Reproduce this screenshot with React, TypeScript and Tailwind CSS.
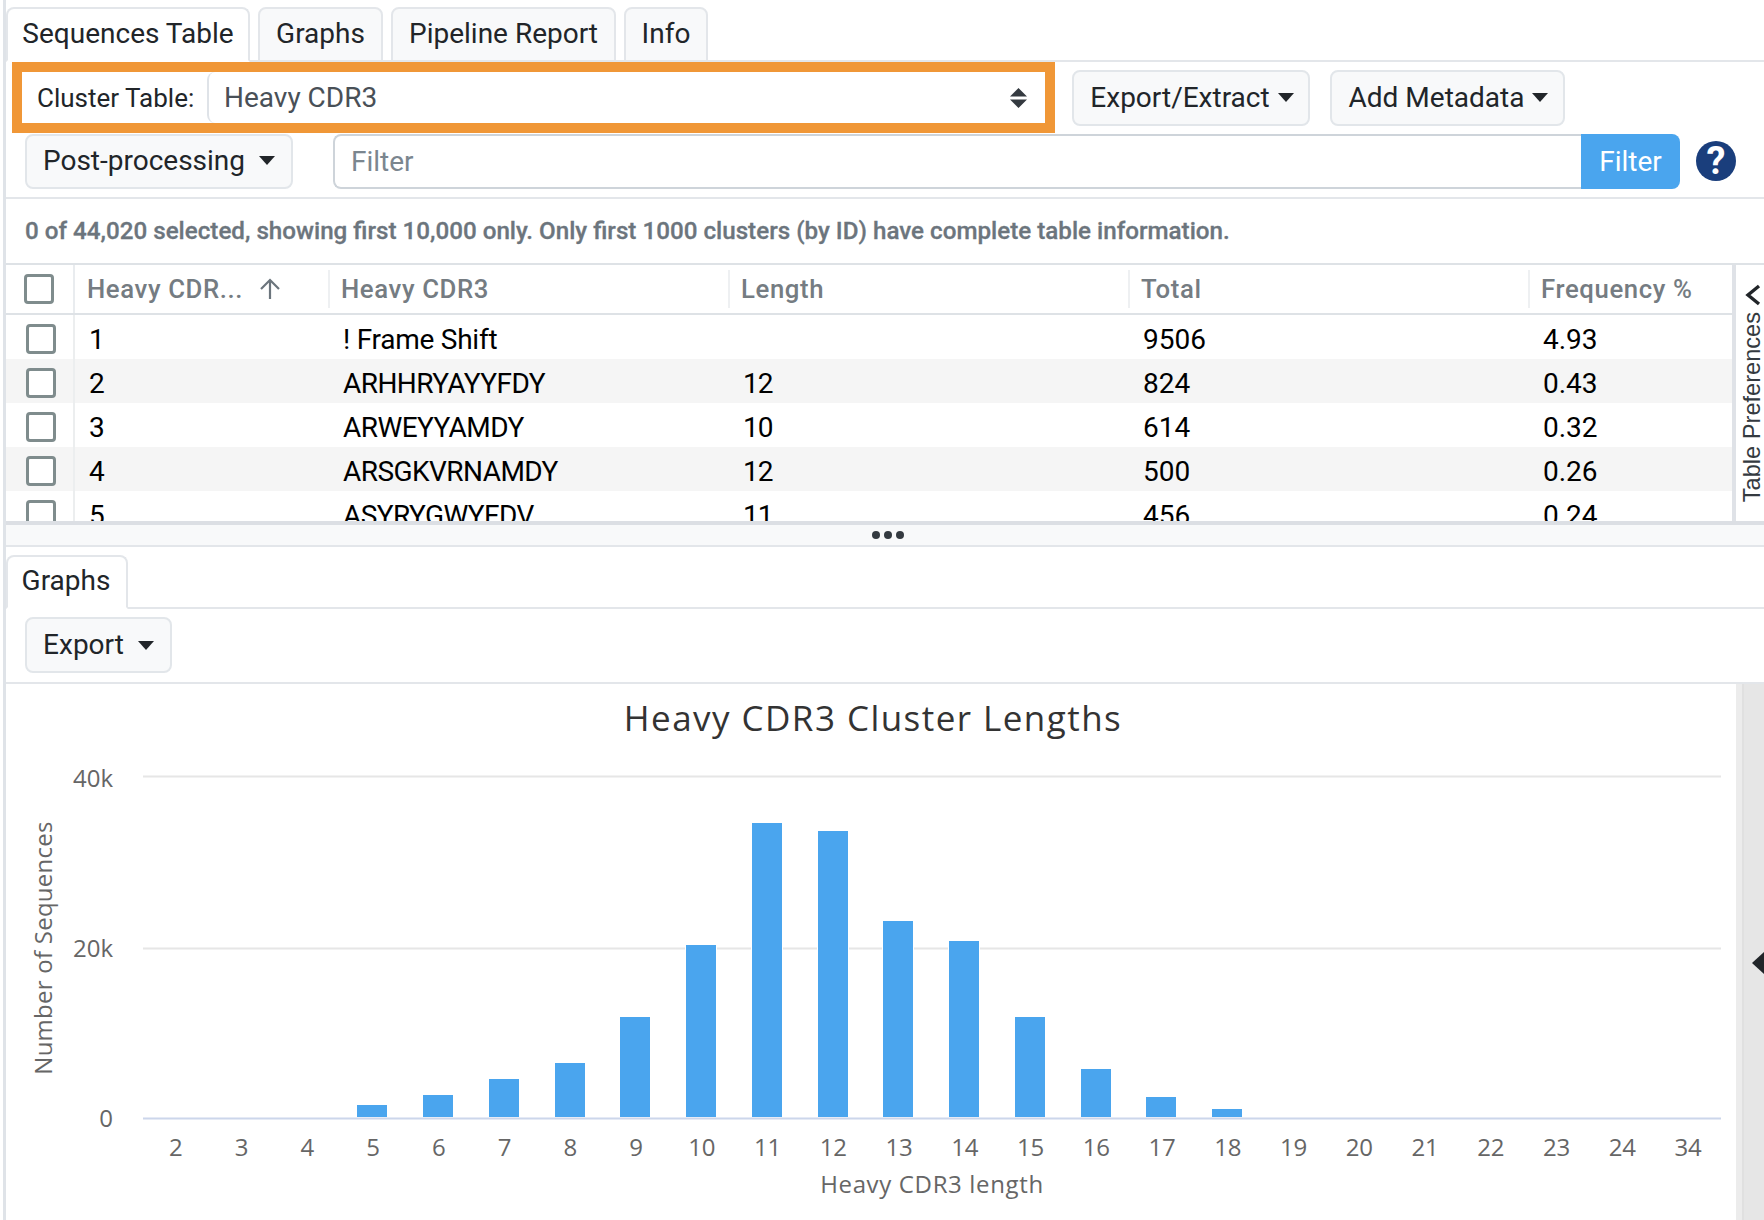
const topTabs = [
  { label: "Sequences Table", width: "w-[244px]", active: true },
  { label: "Graphs", width: "w-[125px]", active: false },
  { label: "Pipeline Report", width: "w-[225px]", active: false },
  { label: "Info", width: "w-[84px]", active: false },
];

const rows = [
  { id: "1", cdr3: "! Frame Shift", length: "", total: "9506", freq: "4.93" },
  { id: "2", cdr3: "ARHHRYAYYFDY", length: "12", total: "824", freq: "0.43" },
  { id: "3", cdr3: "ARWEYYAMDY", length: "10", total: "614", freq: "0.32" },
  { id: "4", cdr3: "ARSGKVRNAMDY", length: "12", total: "500", freq: "0.26" },
  { id: "5", cdr3: "ASYRYGWYFDV", length: "11", total: "456", freq: "0.24" },
];

const categories = [
  "2", "3", "4", "5", "6", "7", "8", "9", "10", "11", "12", "13",
  "14", "15", "16", "17", "18", "19", "20", "21", "22", "23", "24", "34",
];

// bar heights in px, read off the plot
const barHeights = [0, 0, 0, 12, 22, 38, 54, 100, 172, 294, 286, 196, 176, 100, 48, 20, 8, 0, 0, 0, 0, 0, 0, 0];

const PLOT_LEFT = 143;
const PLOT_RIGHT = 1721;
const STEP = (PLOT_RIGHT - PLOT_LEFT) / 24;

function Caret() {
  return <span className="inline-block size-0 border-x-[8px] border-t-[9px] border-x-transparent border-t-[#212529]" />;
}

function DropButton({ label, width, gap }: { label: string; width: string; gap: string }) {
  return (
    <button className={`flex h-[56px] shrink-0 items-center justify-center rounded-[8px] border-2 border-[#e2e6ea] bg-[#f8f9fa] pl-[2px] text-[28px] text-[#212529] ${width} ${gap}`}>
      <span>{label}</span>
      <Caret />
    </button>
  );
}

function Checkbox({ className }: { className: string }) {
  return <span className={`block size-[30px] rounded-[4px] border-[3.5px] border-[#7f8c8d] bg-white ${className}`} />;
}

function ClusterTable() {
  const columns = "grid grid-cols-[69px_253px_400px_400px_400px_204px]";
  return (
    <div className="flex h-[258px] overflow-hidden border-t-2 border-[#dee2e6]">
      <div className="w-[1726px] shrink-0">
        <div className={`${columns} h-[50px] items-center border-b-2 border-[#dee2e6] text-[25.75px] font-medium tracking-[0.6px] text-[#757c82]`}>
          <div className="flex h-full items-center border-r-2 border-[#e9ecef] pl-[18px]">
            <Checkbox className="" />
          </div>
          <div className="flex items-center pl-[12px]">
            <span>Heavy CDR...</span>
            <svg className="ml-[15px]" width="24" height="22" viewBox="0 0 24 22" fill="none" stroke="#6c757d" strokeWidth="2.2">
              <path d="M12 21V2M3 11l9-9 9 9" />
            </svg>
          </div>
          <div className="border-l-2 border-[#eef0f2] pl-[11px]">Heavy CDR3</div>
          <div className="border-l-2 border-[#eef0f2] pl-[11px]">Length</div>
          <div className="border-l-2 border-[#eef0f2] pl-[11px]">Total</div>
          <div className="border-l-2 border-[#eef0f2] pl-[11px]">Frequency %</div>
        </div>
        {rows.map((row, i) => (
          <div key={row.id} className={`${columns} h-[44px] items-center text-[28px] text-black ${i % 2 === 1 ? "bg-[#f5f5f5]" : "bg-white"}`}>
            <div className="flex h-full items-center border-r-2 border-[#eceeef] pl-[20px]">
              <Checkbox className="mt-[2px]" />
            </div>
            <div className="pt-[4px] pl-[14px]">{row.id}</div>
            <div className={`pt-[4px] pl-[15px] ${i === 0 ? "tracking-[-0.25px]" : "tracking-[-0.55px]"}`}>{row.cdr3}</div>
            <div className="pt-[4px] pl-[15px] tracking-[-1px]">{row.length}</div>
            <div className="pt-[4px] pl-[15px]">{row.total}</div>
            <div className="pt-[4px] pl-[15px]">{row.freq}</div>
          </div>
        ))}
      </div>
      <div className="flex w-[32px] shrink-0 flex-col items-center border-l-4 border-[#dfe2e7] pt-[19px] pl-[6px]">
        <svg width="16" height="22" viewBox="0 0 16 22" fill="none" stroke="#212529" strokeWidth="3.4">
          <path d="M14 2 3 11l11 9" />
        </svg>
        <span className="mt-[6px] rotate-180 font-['Liberation_Sans',sans-serif] text-[23.6px] leading-none whitespace-nowrap text-[#343a40] [writing-mode:vertical-rl]">
          Table Preferences
        </span>
      </div>
    </div>
  );
}

function HistogramChart() {
  const text = "font-['Open_Sans',sans-serif]";
  return (
    <svg className="block shrink-0" width="1730" height="536" viewBox="6 684 1730 536">
      <text x="873" y="731" textAnchor="middle" fill="#333333" fontSize="35" letterSpacing="1.45" className={text}>
        Heavy CDR3 Cluster Lengths
      </text>
      <rect x={PLOT_LEFT} y="775.5" width={PLOT_RIGHT - PLOT_LEFT} height="2" fill="#e6e6e6" />
      <rect x={PLOT_LEFT} y="947.5" width={PLOT_RIGHT - PLOT_LEFT} height="2" fill="#e6e6e6" />
      <text x="113" y="787" textAnchor="end" fill="#666666" fontSize="24" className={text}>40k</text>
      <text x="113" y="957" textAnchor="end" fill="#666666" fontSize="24" className={text}>20k</text>
      <text x="113" y="1127" textAnchor="end" fill="#666666" fontSize="24" className={text}>0</text>
      {categories.map((cat, i) => {
        const center = PLOT_LEFT + STEP * (i + 0.5);
        return (
          <g key={cat}>
            {barHeights[i] > 0 && (
              <rect x={Math.round(center - 15.7)} y={1117 - barHeights[i]} width="30" height={barHeights[i]} fill="#4aa5ee" stroke="#ffffff" strokeWidth="2" paintOrder="stroke" />
            )}
            <text x={center} y="1155.5" textAnchor="middle" fill="#666666" fontSize="24" className={text}>{cat}</text>
          </g>
        );
      })}
      <rect x={PLOT_LEFT} y="1117.5" width={PLOT_RIGHT - PLOT_LEFT} height="2" fill="#ccd6eb" />
      <text x="932" y="1193" textAnchor="middle" fill="#666666" fontSize="24" letterSpacing="0.65" className={text}>
        Heavy CDR3 length
      </text>
      <text transform="translate(52 948) rotate(-90)" textAnchor="middle" fill="#666666" fontSize="24" letterSpacing="0.25" className={text}>
        Number of Sequences
      </text>
    </svg>
  );
}

export default function App() {
  return (
    <div className="h-[1220px] w-[1764px] overflow-hidden bg-white pl-[3px] font-['Roboto',sans-serif]">
      <div className="flex h-full flex-col border-l-[3px] border-[#dfe3e8]">
        {/* top tabs */}
        <div className="flex h-[62px] shrink-0 items-end gap-[8px] border-b-2 border-[#e3e6ea] pt-[7px]">
          {topTabs.map((tab) => (
            <div
              key={tab.label}
              className={`-mb-[2px] flex h-[55px] items-center justify-center rounded-t-[8px] border-2 pb-[2px] text-[28px] text-[#212529] ${tab.width} ${
                tab.active ? "border-[#e3e6ea] border-b-white bg-white" : "border-[#e3e6ea] bg-[#f8f9fa]"
              }`}
            >
              {tab.label}
            </div>
          ))}
        </div>

        {/* cluster select + actions */}
        <div className="flex h-[71px] shrink-0 items-center pl-[6px]">
          <div className="flex h-[71px] w-[1043px] shrink-0 items-center border-[10px] border-[#f09737] bg-white pl-[15px] text-[26px] text-[#212529]">
            <span className="w-[170px] shrink-0 pt-[1px]">Cluster Table:</span>
            <div className="flex h-full flex-1 items-center justify-between rounded-l-[8px] border-l-2 border-[#dfe3e8] pr-[18px] pl-[15px] text-[28px] text-[#495057]">
              <span className="pt-[1px]">Heavy CDR3</span>
              <svg width="17" height="20" viewBox="0 0 17 20" fill="#343a40">
                <path d="M8.5 0 17 8.5H0zM0 11.5h17L8.5 20z" />
              </svg>
            </div>
          </div>
          <DropButton label="Export/Extract" width="w-[238px]" gap="ml-[17px] gap-[8px]" />
          <DropButton label="Add Metadata" width="w-[235px]" gap="ml-[20px] gap-[8px]" />
        </div>

        {/* post-processing + filter */}
        <div className="flex h-[66px] shrink-0 items-start border-b-2 border-[#e3e6ea] pt-[1px] pl-[19px]">
          <button className="flex h-[55px] w-[268px] shrink-0 items-center justify-center gap-[14px] rounded-[8px] border-2 border-[#e2e6ea] bg-[#f8f9fa] pb-[2px] text-[28px] text-[#212529]">
            <span>Post-processing</span>
            <Caret />
          </button>
          <div className="ml-[40px] flex h-[55px] w-[1248px] shrink-0 items-center rounded-l-[8px] border-2 border-r-0 border-[#ced4da] bg-white pl-[16px] text-[28px] text-[#7b868f]">
            Filter
          </div>
          <button className="flex h-[55px] w-[99px] shrink-0 items-center justify-center rounded-r-[8px] bg-[#4aa5ee] text-[28px] text-white">
            Filter
          </button>
          <span className="mt-[7px] ml-[16px] flex size-[40px] shrink-0 items-center justify-center rounded-full bg-[#1a3e7c] text-[38px] leading-none font-bold text-white">
            ?
          </span>
        </div>

        {/* status line */}
        <div className="flex h-[64px] shrink-0 items-center pl-[19px] text-[24.2px] font-medium text-[#6c757d] [-webkit-text-stroke:0.3px_#6c757d]">
          0 of 44,020 selected, showing first 10,000 only. Only first 1000 clusters (by ID) have complete table information.
        </div>

        <ClusterTable />

        {/* resize gutter */}
        <div className="flex h-[26px] shrink-0 items-center justify-center gap-[4px] border-t-4 border-b-2 border-t-[#dcdfe4] border-b-[#e3e6ea] bg-[#f8f9fa] pl-[6px]">
          <span className="size-[8px] rounded-full bg-[#343a40]" />
          <span className="size-[8px] rounded-full bg-[#343a40]" />
          <span className="size-[8px] rounded-full bg-[#343a40]" />
        </div>

        {/* graphs tab */}
        <div className="flex h-[62px] shrink-0 items-end border-b-2 border-[#e3e6ea]">
          <div className="-mb-[2px] flex h-[54px] w-[122px] items-center justify-center rounded-t-[8px] border-2 border-[#e3e6ea] border-b-white bg-white pr-[2px] pb-[2px] text-[28px] text-[#212529]">
            Graphs
          </div>
        </div>
        <div className="flex h-[75px] shrink-0 items-start border-b-2 border-[#e3e6ea] pt-[8px] pl-[19px]">
          <button className="flex h-[56px] w-[147px] shrink-0 items-center justify-center gap-[14px] rounded-[8px] border-2 border-[#e2e6ea] bg-[#f8f9fa] text-[28px] text-[#212529]">
            <span>Export</span>
            <Caret />
          </button>
        </div>

        <div className="flex flex-1">
          <HistogramChart />
          <div className="flex h-full flex-1 border-l-[6px] border-[#ececec]">
            <div className="flex h-full flex-1 items-center border-l-2 border-[#e0e0e0] bg-[#e6e6e6] pl-[8px]">
              <span className="mt-[22px] size-0 border-y-[11px] border-r-[12px] border-y-transparent border-r-[#212529]" />
            </div>
          </div>
        </div>
      </div>
    </div>
  );
}
